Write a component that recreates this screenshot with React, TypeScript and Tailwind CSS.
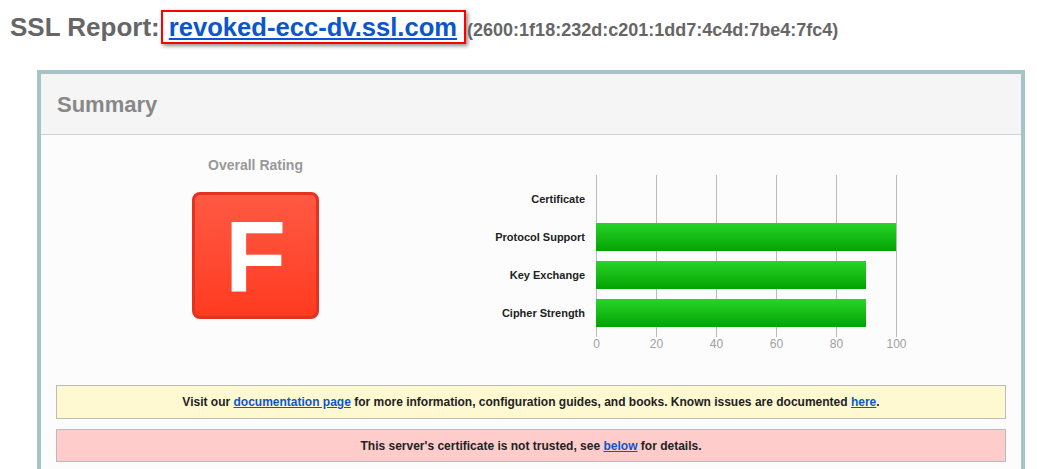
import React from "react";

const rows = [
  { label: "Certificate", value: 0 },
  { label: "Protocol Support", value: 100 },
  { label: "Key Exchange", value: 90 },
  { label: "Cipher Strength", value: 90 },
];

const ticks = [0, 20, 40, 60, 80, 100];

const Chart = () => {
  return (
    <div className="flex flex-col">
      <div className="flex">
        <div className="w-[114px] pt-[5px] pb-[5px] flex flex-col">
          {rows.map((r) => (
            <div
              key={r.label}
              className="h-[38px] flex items-center justify-end text-[11px] font-bold text-[#222]"
            >
              {r.label}
            </div>
          ))}
        </div>
        <div className="relative ml-[11px] w-[301px] pt-[5px] pb-[5px]">
          {ticks.map((t) => (
            <div
              key={t}
              className="absolute top-0 bottom-0 w-px bg-[#bbbbbb]"
              style={{ left: t * 3 }}
            />
          ))}
          {rows.map((r) => (
            <div key={r.label} className="relative h-[38px] flex items-center">
              {r.value > 0 && (
                <div
                  className="h-[28px] bg-gradient-to-b from-[#27d427] to-[#00a300]"
                  style={{ width: r.value * 3 }}
                />
              )}
            </div>
          ))}
        </div>
      </div>
      <div className="flex ml-[125px] w-[301px] justify-between">
        {ticks.map((t) => (
          <div key={t} className="w-px flex justify-center">
            <span className="text-[12px] leading-[14px] text-[#a0a0a0] whitespace-nowrap">
              {t}
            </span>
          </div>
        ))}
      </div>
    </div>
  );
};

const App = () => {
  return (
    <div className="w-[1037px] h-[469px] overflow-hidden bg-white font-['Liberation_Sans',Arial,sans-serif]">
      <div className="flex items-baseline pl-[10px] pt-[10px]">
        <span className="text-[26px] leading-[30px] font-bold text-[#666]">SSL Report:</span>
        <a
          href="#"
          className="ml-[1px] border-2 border-[#ff0000] pl-[6px] pr-[7px] text-[25.6px] leading-[30px] font-bold text-[#0a56cc] underline shadow-[2px_2px_4px_rgba(0,0,0,0.45)]"
        >
          revoked-ecc-dv.ssl.com
        </a>
        <span className="ml-[1px] text-[18px] font-bold text-[#666]">
          (2600:1f18:232d:c201:1dd7:4c4d:7be4:7fc4)
        </span>
      </div>

      <div className="mt-[26px] ml-[37px] w-[988px] border-4 border-[#a6c3c5]">
        <div className="h-[61px] flex items-center pl-[16px] bg-[#f5f5f5] border-b border-[#c5d6d4]">
          <span className="text-[22px] font-bold text-[#888]">Summary</span>
        </div>
        <div className="bg-[#fcfcfc] pb-[10px]">
          <div className="flex h-[240px]">
            <div className="w-[429px] flex flex-col items-center pt-[22px]">
              <span className="text-[14px] leading-[16px] font-bold text-[#999]">Overall Rating</span>
              <div className="mt-[19px] w-[127px] h-[127px] rounded-[8px] border-[3px] border-[#e33220] bg-gradient-to-b from-[#ff5842] to-[#ff3a1f] flex items-center justify-center">
                <span className="text-[100px] leading-none font-bold text-white">F</span>
              </div>
            </div>
            <div className="pt-[40px] ml-[1px]">
              <Chart />
            </div>
          </div>
          <div className="mt-[10px] mx-[15px] flex flex-col gap-[10px]">
            <div className="h-[34px] flex items-center justify-center bg-[#fff9d1] border border-[#bbbbbb] text-[12px] font-bold text-[#222]">
              <span>
                Visit our{" "}
                <a href="#" className="text-[#0a56cc] underline">documentation page</a>{" "}
                for more information, configuration guides, and books. Known issues are documented{" "}
                <a href="#" className="text-[#0a56cc] underline">here</a>.
              </span>
            </div>
            <div className="h-[33px] flex items-center justify-center bg-[#ffcccc] border border-[#bbbbbb] text-[12px] font-bold text-[#222]">
              <span>
                This server's certificate is not trusted, see{" "}
                <a href="#" className="text-[#0a56cc] underline">below</a> for details.
              </span>
            </div>
          </div>
        </div>
      </div>
    </div>
  );
};

export default App;
